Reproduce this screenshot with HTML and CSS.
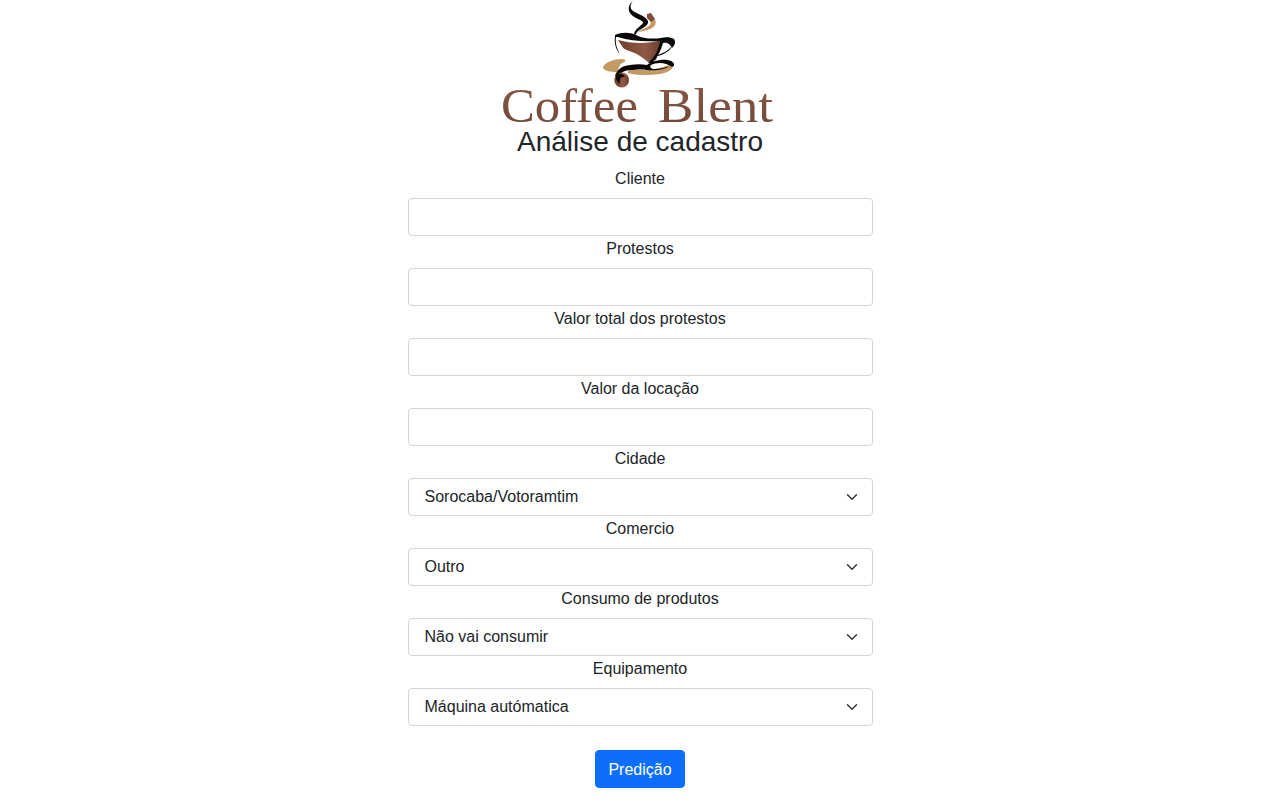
FILE: index.html
```html
<!DOCTYPE html>
<html lang="pt-BR">
<head>
<meta charset="utf-8">
<title>Análise de cadastro</title>
<link rel="stylesheet" href="styles.css">
</head>
<body>
<header class="brand">
  <svg class="logo" viewBox="490 0 300 124" width="300" height="124" aria-label="Coffee Blent">
    <defs>
      <linearGradient id="cupFill" x1="0" x2="1" y1="0" y2="0">
        <stop offset="0" stop-color="#6b3d2a"/>
        <stop offset="0.6" stop-color="#8f5a44"/>
        <stop offset="1" stop-color="#6a3f2e"/>
      </linearGradient>
      <linearGradient id="wordFill" x1="0" x2="0" y1="0" y2="1">
        <stop offset="0" stop-color="#8a5b48"/>
        <stop offset="1" stop-color="#6e4534"/>
      </linearGradient>
    </defs>
    <path class="tan" d="M652 16 C657 20 657 25 652 28 C647 31 641 31 637 33 C641 29 647 28 650 25 C652 22 650 19 648 17 Z"/>
    <path class="mocha" d="M647 14 L651 13 L655 19 L651 22 L647 18 Z"/>
    <path class="ink" d="M633 1 C630 4 630 8 632 10 C636 14 645 15 648 21 C649 26 642 28 638 31 L635 35 L634 34 C635 29 641 26 643 23 C644 20 634 19 630 13 C627 8 630 3 633 1 Z"/>
    <path class="cup" d="M618 40 C632 44 648 44 662 40 L656 60 L648 62 C643 58 638 54 632 52 C627 50 623 49 622 46 Z"/>
    <path class="ink" d="M615 35 C622 32 631 32 638 36 C645 39 654 39 661 38 C665 37 671 37 674 39 C676 42 675 45 672 48 C670 43 666 42 663 43 C661 50 658 57 652 63 L648 63 C652 59 657 54 658 48 C659 45 660 43 660 41 C645 42 630 41 618 37 L615 37 Z"/>
    <path class="ink" d="M672 46 C671 50 665 54 658 56 L658 55 C664 53 669 50 672 46 Z"/>
    <path class="ink" d="M616 37 C615 43 617 49 620 54 C616 50 614 43 615 37 Z"/>
    <path class="tan" d="M603 67 C605 62 614 59 622 59 C627 59 626 62 622 63 C619 65 618 69 618 72 C610 72 603 71 603 67 Z"/>
    <path class="tan" d="M628 70 C640 70 660 71 672 63 C675 68 670 72 660 74 C648 76 634 75 628 73 Z"/>
    <path class="ink" d="M615 76 C617 70 621 66 630 65 C636 64 642 64 647 65 C651 61 664 58 671 61 C675 63 675 66 672 67 C666 62 656 62 651 65 C649 67 651 69 655 69 C660 69 665 68 669 66 C665 70 654 71 647 70 C641 69 636 70 629 70 C623 71 620 73 618 78 Z"/>
    <circle class="cup" cx="621.7" cy="80" r="7.4"/>
    <path class="ink" d="M617 74 C621 73 624 74 625 77 C621 76 619 79 620 84 C616 81 615 77 617 74 Z"/>
    <text class="wordmark" y="122"><tspan x="501" textLength="137" lengthAdjust="spacingAndGlyphs">Coffee</tspan> <tspan x="658" textLength="115" lengthAdjust="spacingAndGlyphs">Blent</tspan></text>
  </svg>
</header>
<main class="page">
  <h1 class="title">Análise de cadastro</h1>
  <form class="form">
    <label class="label" for="cliente">Cliente</label>
    <input class="control" id="cliente" type="text">
    <label class="label" for="protestos">Protestos</label>
    <input class="control" id="protestos" type="text">
    <label class="label" for="valor-protestos">Valor total dos protestos</label>
    <input class="control" id="valor-protestos" type="text">
    <label class="label" for="valor-locacao">Valor da locação</label>
    <input class="control" id="valor-locacao" type="text">
    <label class="label" for="cidade">Cidade</label>
    <select class="control select" id="cidade"><option>Sorocaba/Votoramtim</option></select>
    <label class="label" for="comercio">Comercio</label>
    <select class="control select" id="comercio"><option>Outro</option></select>
    <label class="label" for="consumo">Consumo de produtos</label>
    <select class="control select" id="consumo"><option>Não vai consumir</option></select>
    <label class="label" for="equipamento">Equipamento</label>
    <select class="control select" id="equipamento"><option>Máquina autómatica</option></select>
    <button class="submit" type="button">Predição</button>
  </form>
</main>
</body>
</html>
```
FILE: styles.css
```css
* { box-sizing: border-box; }
html, body { margin: 0; }
body {
  background: #fff;
  color: #212529;
  font-family: "Liberation Sans", Arial, sans-serif;
  font-size: 16px;
  line-height: 1.5;
}
.brand { display: flex; justify-content: center; height: 124.8px; }
.logo { display: block; overflow: visible; }
.tan { fill: #c49a64; }
.mocha { fill: #7d4c3a; }
.ink { fill: #0a0706; }
.cup { fill: url(#cupFill); }
.wordmark {
  fill: url(#wordFill);
  font-family: "Liberation Serif", "Times New Roman", serif;
  font-size: 48px;
}
.page { width: 465px; margin: 0 auto; }
.title {
  margin: 0 0 8px;
  font-size: 28px;
  font-weight: 500;
  line-height: 1.2;
  text-align: center;
}
.form { display: flex; flex-direction: column; align-items: center; }
.label { margin-bottom: 8px; height: 24px; line-height: 26px; }
.control {
  display: block;
  width: 100%;
  height: 38px;
  padding: 6px 12px;
  border: 1px solid #ced4da;
  border-radius: 4px;
  background-color: #fff;
  color: #212529;
  font: inherit;
}
.select {
  appearance: none;
  padding-left: 16px;
  padding-right: 36px;
  background-image: url("data:image/svg+xml,%3csvg xmlns='http://www.w3.org/2000/svg' viewBox='0 0 16 16'%3e%3cpath fill='none' stroke='%23343a40' stroke-linecap='round' stroke-linejoin='round' stroke-width='2' d='m2 5 6 6 6-6'/%3e%3c/svg%3e");
  background-repeat: no-repeat;
  background-position: right 12px center;
  background-size: 16px 12px;
}
.submit {
  margin-top: 24px;
  height: 38px;
  padding: 7px 12px 5px;
  border: 1px solid #0d6efd;
  border-radius: 4px;
  background: #0d6efd;
  color: #fff;
  font: inherit;
}
```
